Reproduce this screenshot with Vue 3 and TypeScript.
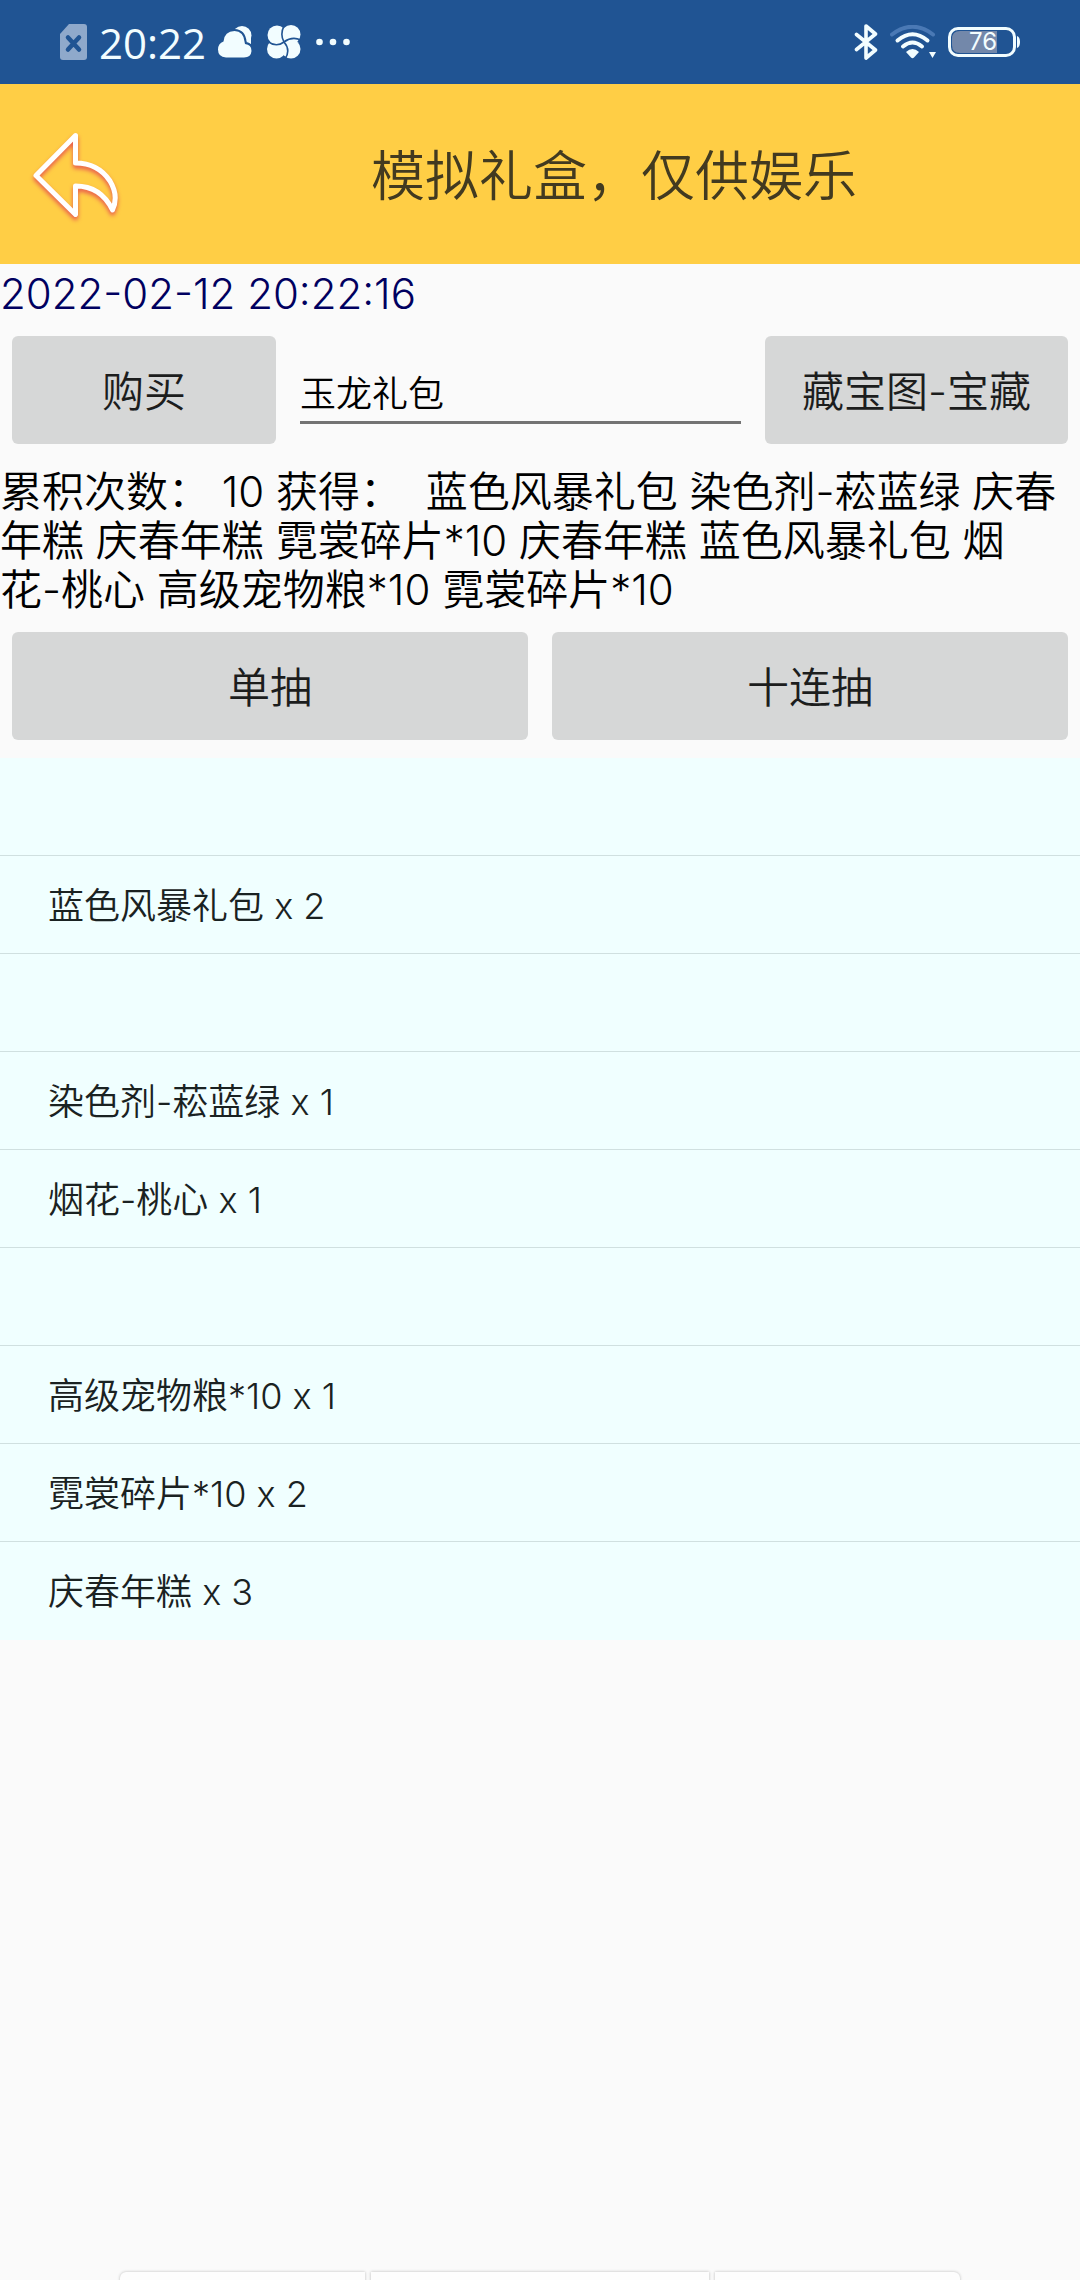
<script setup lang="ts">
import { ref } from 'vue'

const pack = ref('玉龙礼包')
const now = '2022-02-12 20:22:16'
const count = 10

const history: string[] = [
  '蓝色风暴礼包',
  '染色剂-菘蓝绿',
  '庆春年糕',
  '庆春年糕',
  '霓裳碎片*10',
  '庆春年糕',
  '蓝色风暴礼包',
]
const historyTail: string[] = ['高级宠物粮*10', '霓裳碎片*10']

const rows: string[] = [
  '',
  '蓝色风暴礼包 x 2',
  '',
  '染色剂-菘蓝绿 x 1',
  '烟花-桃心 x 1',
  '',
  '高级宠物粮*10 x 1',
  '霓裳碎片*10 x 2',
  '庆春年糕 x 3',
]
</script>

<template>
  <div class="page">
    <div class="status">
      <svg class="sim" width="27" height="36" viewBox="0 0 27 36" aria-hidden="true">
        <path d="M9 0H24Q27 0 27 3V33Q27 36 24 36H3Q0 36 0 33V10Z" fill="#8fa9cb" />
        <path d="M8 13.500L19 25.500M19 13.500L8 25.500" stroke="#205493" stroke-width="4.500" stroke-linecap="round" />
      </svg>
      <span class="clock">20:22</span>
      <svg class="cloud" width="34" height="32" viewBox="0 0 34 32" aria-hidden="true">
        <circle cx="24" cy="9.500" r="9.500" fill="#f2fdff" />
        <path d="M22 6H33V18H24Z" fill="#f2fdff" />
        <path d="M8 31.500Q0 31 0 23.500Q0 17.500 5.500 15.500Q6.500 5 16.500 5Q25.500 5.500 26.500 15.500L27 18Q33.500 18.500 33.500 25Q33 31.500 26 31.500Z" fill="#f2fdff" stroke="#205493" stroke-width="4" paint-order="stroke" />
      </svg>
      <svg class="pinwheel" width="34" height="34" viewBox="0 0 34 34" aria-hidden="true">
        <g fill="#f2fdff">
          <circle cx="10" cy="10" r="9.500" />
          <circle cx="24" cy="9.500" r="9.500" />
          <circle cx="9.500" cy="24" r="9.500" />
          <circle cx="24" cy="24" r="9.500" />
          <rect x="8" y="8" width="18" height="18" />
        </g>
        <path d="M17.500 0Q12.500 9 17 17Q24 25 18 34M0 16Q9 23 17 17Q25 11 34 15" fill="none" stroke="#205493" stroke-width="1.600" />
      </svg>
      <svg width="34" height="8" viewBox="0 0 34 8" aria-hidden="true">
        <g fill="#f2fdff">
          <circle cx="3.500" cy="4" r="3.300" />
          <circle cx="17" cy="4" r="3.300" />
          <circle cx="30.500" cy="4" r="3.300" />
        </g>
      </svg>
      <span class="spacer"></span>
      <svg class="bluetooth" width="24" height="36" viewBox="0 0 24 36" aria-hidden="true">
        <path d="M2.500 10.500L21.500 26L12 34V2L21.500 10L2.500 25.500" fill="none" stroke="#f2fdff" stroke-width="3.600" stroke-linecap="round" stroke-linejoin="round" />
      </svg>
      <svg class="wifi" width="46" height="34" viewBox="0 0 46 34" aria-hidden="true">
        <path d="M2 9.500Q22.500 -6 43 9.500" fill="none" stroke="#4a79b5" stroke-width="4" stroke-linecap="round" />
        <path d="M7.500 15.500Q22.500 3 37.500 15.500M13 21.500Q22.500 13.500 32 21.500" fill="none" stroke="#f2fdff" stroke-width="4" stroke-linecap="round" />
        <path d="M16 27Q22.500 21 29 27L24 32.500Q22.500 34 21 32.500Z" fill="#f2fdff" />
        <path d="M39 27H46L42.500 33Z" fill="#f2fdff" />
      </svg>
      <div class="battery">
        <svg width="72" height="30" viewBox="0 0 72 30" aria-hidden="true">
          <path d="M12 4H49V26H12Q4 26 4 18V12Q4 4 12 4Z" fill="#7388aa" />
          <rect x="1.500" y="1.500" width="65" height="27" rx="8.500" fill="none" stroke="#f2fdff" stroke-width="3" />
          <path d="M69 9Q72 10 72 15Q72 20 69 21Z" fill="#f2fdff" />
        </svg>
        <span class="level">76</span>
      </div>
    </div>

    <header class="bar">
      <button class="back" type="button" aria-label="返回">
        <svg width="100" height="100" viewBox="0 0 100 100" aria-hidden="true">
          <path d="M51.500 11.500L12 51.500L51.500 90.500V62Q77 62 88.500 86Q95 72 86 57Q74 39 51.500 39Z" fill="none" stroke="#fff" stroke-width="5" stroke-linejoin="round" />
        </svg>
      </button>
      <h1 class="title">模拟礼盒，仅供娱乐</h1>
    </header>

    <main>
      <p class="text date">{{ now }}</p>

      <div class="actions">
        <button class="btn buy" type="button">购买</button>
        <input v-model="pack" class="field" type="text" aria-label="礼包名称" />
        <button class="btn map" type="button">藏宝图-宝藏</button>
      </div>

      <p class="text">累积次数： {{ count }} 获得： &nbsp;{{ history.join(' ') }} 烟<span class="keep">花-桃心</span> {{ historyTail.join(' ') }}</p>

      <div class="actions">
        <button class="btn draw" type="button">单抽</button>
        <button class="btn draw" type="button">十连抽</button>
      </div>

      <ul class="list">
        <li v-for="(row, i) in rows" :key="i" class="row">{{ row }}</li>
      </ul>
    </main>

    <div class="tray" aria-hidden="true">
      <span class="slot first"></span>
      <span class="slot middle"></span>
      <span class="slot last"></span>
    </div>
  </div>
</template>

<style>
body {
  margin: 0;
  background: #fafafa;
}
</style>

<style scoped>
.page {
  display: flex;
  flex-direction: column;
  min-height: 100vh;
  background: #fafafa;
  color: #000;
  font-family: Inter, "Noto Sans CJK SC", sans-serif;
  font-weight: 350;
}

.status {
  display: flex;
  align-items: center;
  box-sizing: border-box;
  height: 84px;
  padding: 0 60px;
  background: #205493;
}

.clock {
  margin: 2px 12px 0;
  color: #f2fdff;
  font-family: "Open Sans", sans-serif;
  font-size: 42px;
  font-weight: 400;
  line-height: 48px;
}

.pinwheel {
  margin: 0 15px;
}

.spacer {
  flex: 1;
}

.wifi {
  margin: 0 12px;
}

.battery {
  position: relative;
  display: flex;
}

.level {
  position: absolute;
  inset: 0 2px 0 0;
  color: #f2fdff;
  font-size: 24px;
  font-weight: 400;
  line-height: 30px;
  text-align: center;
}

.bar {
  display: flex;
  align-items: center;
  height: 180px;
  background: #ffce45;
}

.back {
  width: 148px;
  height: 148px;
  padding: 0 24px;
  border: 0;
  background: none;
}

.back svg {
  display: block;
  filter: drop-shadow(0 3px 2px #e8584e);
}

.title {
  flex: 1;
  margin: 0;
  padding-top: 6px;
  color: #423a20;
  font-size: 54px;
  font-weight: 350;
  line-height: 64px;
  text-align: center;
}

.text {
  margin: 0;
  padding-top: 5px;
  font-size: 42px;
  line-height: 49px;
}

.date {
  color: #000060;
}

.keep {
  white-space: nowrap;
}

.actions {
  display: flex;
  gap: 24px;
  padding: 18px 12px;
}

.btn {
  height: 108px;
  padding: 0 36px 4px;
  border: 0;
  border-radius: 6px;
  background: #d6d7d7;
  color: #1c1d1d;
  font: inherit;
  font-size: 42px;
}

.buy {
  flex: 0 0 25%;
}

.map {
  flex: none;
  padding: 0 37px 4px;
}

.draw {
  flex: 1;
}

.field {
  flex: 1;
  min-width: 0;
  box-sizing: border-box;
  height: 70px;
  margin-top: 18px;
  padding: 6px 0 0;
  border: 0;
  border-bottom: 3px solid #737373;
  background: none;
  color: #000;
  font: inherit;
  font-size: 36px;
  outline: 0;
}

.list {
  margin: 0;
  padding: 0;
  list-style: none;
  background: #f0ffff;
}

.row {
  box-sizing: border-box;
  height: 98px;
  padding: 4px 48px 0;
  border-bottom: 1px solid #d0e0e0;
  color: #1a2222;
  font-size: 36px;
  line-height: 93px;
}

.row:last-child {
  border-bottom: 0;
}

.tray {
  display: flex;
  gap: 6px;
  height: 8px;
  margin-top: auto;
  padding: 4px 120px 0;
  overflow: hidden;
}

.slot {
  flex: 245;
  height: 24px;
  background: #fdfdfd;
  box-shadow: 0 0 3px #b8b8b8;
}

.middle {
  flex: 338;
}

.first {
  border-radius: 6px 0 0 0;
}

.last {
  border-radius: 0 6px 0 0;
}
</style>
